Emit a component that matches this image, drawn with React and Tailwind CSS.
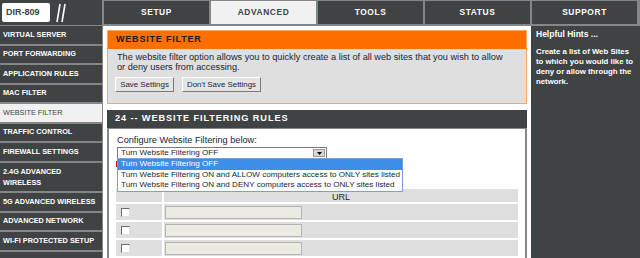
import React from "react";

const navItems = [
  ["VIRTUAL SERVER"],
  ["PORT FORWARDING"],
  ["APPLICATION RULES"],
  ["MAC FILTER"],
  ["WEBSITE FILTER", true],
  ["TRAFFIC CONTROL"],
  ["FIREWALL SETTINGS"],
  ["2.4G ADVANCED WIRELESS"],
  ["5G ADVANCED WIRELESS"],
  ["ADVANCED NETWORK"],
  ["WI-FI PROTECTED SETUP"],
  [""],
];

const tabs = ["SETUP", "ADVANCED", "TOOLS", "STATUS", "SUPPORT"];

function Checkbox() {
  return (
    <div className="w-[9px] h-[9px] bg-white border-t border-l border-t-[#6b6b6b] border-l-[#6b6b6b] border-r border-b border-r-[#e0e0e0] border-b-[#e0e0e0]" />
  );
}

export default function App() {
  return (
    <div className="w-[640px] h-[258px] overflow-hidden bg-white font-['Liberation_Sans',Arial,sans-serif] text-[#1e1e2e]">
      {/* Top bar */}
      <div className="flex h-[26px] bg-[#858787] pt-[1px] pb-[2px] gap-[2px]">
        <div className="w-[102px] -mt-[1px] h-[25px] bg-[#404343] flex items-center pl-[2px]">
          <div className="w-[48px] h-[19px] bg-white rounded-[2px] flex items-center pl-[4px] text-[9px] font-bold text-[#404343]">
            DIR-809
          </div>
          <svg width="14" height="20" viewBox="0 0 14 20" className="ml-[2px]">
            <line x1="5" y1="19" x2="8" y2="1" stroke="white" strokeWidth="1.6" />
            <line x1="10" y1="19" x2="13" y2="1" stroke="white" strokeWidth="1.6" />
          </svg>
        </div>
        {tabs.map((t) => (
          <div
            key={t}
            className={
              t === "ADVANCED"
                ? "w-[105px] bg-[#f1f1f1] flex items-center justify-center text-[8.4px] font-bold tracking-[0.6px] text-[#404343]"
                : "w-[105px] bg-[#404343] flex items-center justify-center text-[8.4px] font-bold tracking-[0.6px] text-white"
            }
          >
            {t}
          </div>
        ))}
      </div>

      <div className="flex h-[232px]">
        {/* Left nav */}
        <div className="w-[103px] shrink-0 bg-[#858787] pr-[1px] flex flex-col gap-[2px] overflow-hidden">
          {navItems.map(([label, active], idx) =>
            label === "2.4G ADVANCED WIRELESS" ? (
              <div
                key={idx}
                className="shrink-0 h-[28.5px] bg-[#404343] text-white font-bold text-[7.3px] flex items-center pl-[3px] leading-[11px]"
              >
                <span>
                  2.4G ADVANCED
                  <br />
                  WIRELESS
                </span>
              </div>
            ) : (
              <div
                key={idx}
                className={
                  active
                    ? "shrink-0 h-[17.5px] bg-[#f1f1f1] text-[#404343] text-[7.3px] flex items-center pl-[3px] leading-[10px]"
                    : "shrink-0 h-[17.5px] bg-[#404343] text-white font-bold text-[7.3px] flex items-center pl-[3px] leading-[10px]"
                }
              >
                {label}
              </div>
            )
          )}
        </div>

        {/* Main */}
        <div className="w-[428px] shrink-0 px-[4px] pt-[4px] bg-white">
          <div className="border border-[#ffa45c]">
            <div className="h-[18px] bg-[#ff6f00] flex items-center pl-[8px] text-[9px] font-bold tracking-[0.8px] text-[#1b1b1b]">
              WEBSITE FILTER
            </div>
            <div className="bg-[#dfdfdf] h-[54px] pl-[9px] pt-[4px] text-[9.2px] leading-[9.5px]">
              <p className="whitespace-nowrap">
                The website filter option allows you to quickly create a list of all web sites that you wish to allow
                <br />
                or deny users from accessing.
              </p>
              <div className="flex gap-[8px] mt-[5px] -ml-[2px]">
                <div className="w-[59px] h-[15px] bg-[#e4e4e4] border border-t-white border-l-white border-r-[#7a7a7a] border-b-[#7a7a7a] flex items-center justify-center text-[7.9px]">
                  Save Settings
                </div>
                <div className="w-[79px] h-[15px] bg-[#e4e4e4] border border-t-white border-l-white border-r-[#7a7a7a] border-b-[#7a7a7a] flex items-center justify-center text-[7.9px]">
                  Don't Save Settings
                </div>
              </div>
            </div>
          </div>

          <div className="mt-[6px]">
            <div className="h-[19px] bg-[#404343] flex items-center pl-[8px] text-[9.2px] font-bold tracking-[0.9px] text-white border-b border-[#858787]">
              24 -- WEBSITE FILTERING RULES
            </div>
            <div className="relative border-l-2 border-r-2 border-[#858787] h-[140px] pl-[8px] pt-[5px] pr-[7px]">
              <div className="text-[9.2px] leading-[12px]">Configure Website Filtering below:</div>
              <div className="relative w-[210px] h-[12px] border border-[#7a7a7a] bg-white flex items-center pl-[3px] text-[8.1px] mt-[1px]">
                Turn Website Filtering OFF
                <div className="absolute right-[1px] top-[1px] w-[12px] h-[8px] bg-[#d4d4d4] border border-[#9a9a9a] flex items-center justify-center">
                  <svg width="5" height="3" viewBox="0 0 5 3">
                    <path d="M0 0 L5 0 L2.5 3 Z" fill="#000" />
                  </svg>
                </div>
              </div>
              <div className="w-[3px] h-[6px] bg-[#c00000] mt-[2px] -ml-[1px]" />

              {/* table */}
              <div className="mt-[22px] -ml-[1px] flex flex-col gap-[2px]">
                <div className="flex gap-[2px] h-[13px]">
                  <div className="w-[46px] bg-[#dfdfdf]" />
                  <div className="flex-1 bg-[#dfdfdf] flex items-center justify-center text-[9px] leading-[10px] pt-[2px]">URL</div>
                </div>
                {[0, 1, 2].map((i) => (
                  <div key={i} className="flex gap-[2px] h-[16px]">
                    <div className="w-[46px] bg-[#dfdfdf] flex items-center pl-[5px]">
                      <Checkbox />
                    </div>
                    <div className="flex-1 bg-[#dfdfdf] flex items-center pl-[1px]">
                      <div className="w-[137px] h-[13px] bg-[#ecebe3] border border-[#b5b5b5]" />
                    </div>
                  </div>
                ))}
              </div>

              {/* open dropdown list */}
              <div className="absolute left-[8px] top-[29px] w-[286px] bg-white border border-[#7c9fd6] text-[8.1px] leading-[10.7px] whitespace-nowrap">
                <div className="bg-[#3d8ee8] text-white pl-[3px]">Turn Website Filtering OFF</div>
                <div className="pl-[3px]">Turn Website Filtering ON and ALLOW computers access to ONLY sites listed</div>
                <div className="pl-[3px]">Turn Website Filtering ON and DENY computers access to ONLY sites listed</div>
              </div>
            </div>
          </div>
        </div>

        {/* Sidebar */}
        <div className="flex-1 bg-[#404343] pl-[5px] pr-[3px] pt-[3px] text-white font-bold">
          <div className="text-[8.5px] leading-[10px]">Helpful Hints ...</div>
          <p className="mt-[8px] text-[7.8px] leading-[10px]">
            Create a list of Web Sites to which you would like to deny or allow through the network.
          </p>
        </div>
      </div>
    </div>
  );
}
